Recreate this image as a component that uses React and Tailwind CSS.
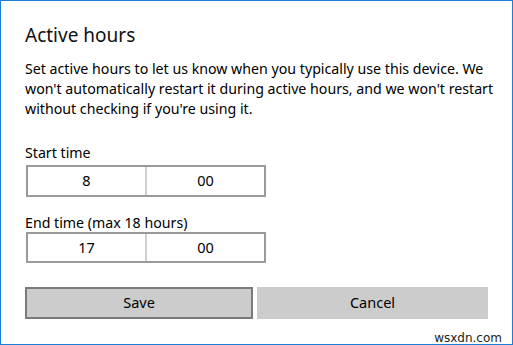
export default function App() {
  const font = { fontFamily: '"Noto Sans", "Open Sans", sans-serif' };
  return (
    <div
      className="relative w-[513px] h-[345px] bg-white border border-[#1c7ed6] text-black overflow-hidden"
      style={font}
    >
      <div className="pl-[24px] pr-[10px] pt-[20px]">
        <h1 className="text-[19px] leading-[28px] font-normal text-[#111]">Active hours</h1>
        <p className="mt-[10px] text-[14.2px] leading-[20px] whitespace-nowrap">
          Set active hours to let us know when you typically use this device. We
          <br />
          won't automatically restart it during active hours, and we won't restart
          <br />
          without checking if you're using it.
        </p>
        <div className="mt-[24px] text-[14.2px] leading-[20px]">Start time</div>
        <div className="mt-[2px] ml-[1px] w-[240px] h-[32px] flex border-2 border-[#9a9a9a] text-[14.5px]">
          <div className="flex-1 flex items-center justify-center border-r-2 border-[#cfcfcf]">8</div>
          <div className="flex-1 flex items-center justify-center">00</div>
        </div>
        <div className="mt-[16px] text-[14.2px] leading-[19px]">End time (max 18 hours)</div>
        <div className="mt-[0px] ml-[1px] w-[240px] h-[31px] flex border-2 border-[#9a9a9a] text-[14.5px]">
          <div className="flex-1 flex items-center justify-center border-r-2 border-[#cfcfcf]">17</div>
          <div className="flex-1 flex items-center justify-center">00</div>
        </div>
        <div className="mt-[24px] flex gap-[4px]">
          <button className="w-[228px] h-[32px] bg-[#cccccc] border-2 border-[#7a7a7a] text-[14.5px] font-normal">
            Save
          </button>
          <button className="w-[231px] h-[32px] bg-[#cccccc] text-[14.5px] font-normal">Cancel</button>
        </div>
      </div>
      <div
        className="absolute right-[10px] bottom-[-3px] text-[12px] text-[#222]"
        style={{ fontFamily: '"DejaVu Sans", sans-serif' }}
      >
        wsxdn.com
      </div>
    </div>
  );
}
